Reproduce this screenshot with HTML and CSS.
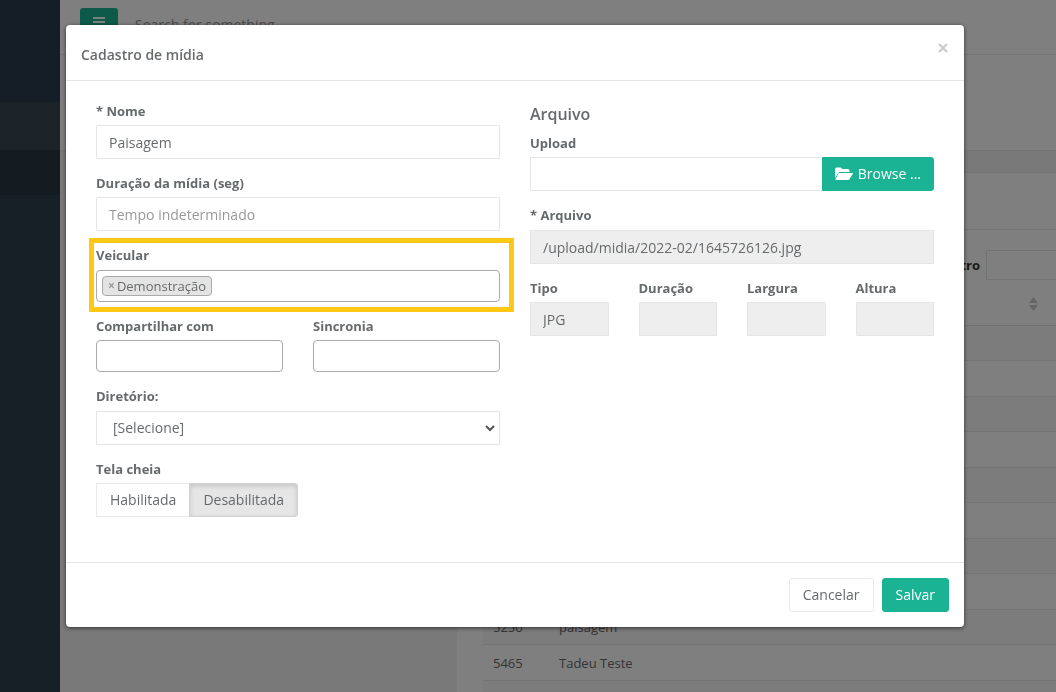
FILE: index.html
```html
<!DOCTYPE html>
<html lang="pt-BR">
<head>
<meta charset="utf-8">
<meta name="viewport" content="width=device-width, initial-scale=1">
<title>Cadastro de mídia</title>
<link rel="stylesheet" href="styles.css">
</head>
<body>
<div class="page">
  <nav class="sidebar" aria-label="Menu">
    <div class="side-top"></div>
    <div class="side-item"></div>
    <div class="side-active"></div>
  </nav>
  <div class="main">
    <header class="topbar">
      <button class="menu-btn" type="button" aria-label="Menu">
        <svg width="12" height="12" viewBox="0 0 12 12" fill="currentColor"><path d="M0 1h12v2H0zM0 5h12v2H0zM0 9h12v2H0z"/></svg>
      </button>
      <input class="top-search" type="text" placeholder="Search for something..." aria-label="Search">
    </header>
    <div class="heading"></div>
    <div class="content">
      <div class="panel-title"></div>
      <div class="panel">
        <div class="filter"><label for="filtro">Filtro</label><input id="filtro" type="text"></div>
        <table class="list">
          <thead><tr><th class="col-id"></th><th></th><th class="col-sort"><svg width="9" height="14" viewBox="0 0 9 14" fill="#ccc"><path d="M4.500 0L9 6H0zM0 8h9l-4.500 6z"/></svg></th></tr></thead>
          <tbody>
            <tr><td></td><td></td><td></td></tr>
            <tr><td></td><td></td><td></td></tr>
            <tr><td></td><td></td><td></td></tr>
            <tr><td></td><td></td><td></td></tr>
            <tr><td></td><td></td><td></td></tr>
            <tr><td></td><td></td><td></td></tr>
            <tr><td></td><td></td><td></td></tr>
            <tr><td></td><td></td><td></td></tr>
            <tr><td>5250</td><td>paisagem</td><td></td></tr>
            <tr><td>5465</td><td>Tadeu Teste</td><td></td></tr>
            <tr><td></td><td></td><td></td></tr>
          </tbody>
        </table>
      </div>
    </div>
  </div>
</div>

<div class="overlay">
  <form class="modal" role="dialog" aria-labelledby="modal-title">
    <header class="modal-head">
      <h1 id="modal-title">Cadastro de mídia</h1>
      <button class="close" type="button" aria-label="Fechar">
        <svg width="10" height="10" viewBox="0 0 10 10" stroke="currentColor" stroke-width="2.200"><path d="M1 1l8 8M9 1L1 9"/></svg>
      </button>
    </header>
    <div class="modal-body">
      <div class="column">
        <div class="group"><label for="nome">* Nome</label><input class="control" id="nome" type="text" value="Paisagem"></div>
        <div class="group"><label for="tempo">Duração da mídia (seg)</label><input class="control" id="tempo" type="text" placeholder="Tempo indeterminado"></div>
        <div class="group roomy highlight">
          <label for="veicular">Veicular</label>
          <div class="tagbox">
            <span class="tag"><button type="button" aria-label="Remover">×</button>Demonstração</span>
            <input id="veicular" type="text">
          </div>
        </div>
        <div class="pair">
          <div class="group"><label for="compartilhar">Compartilhar com</label><div class="tagbox"><input id="compartilhar" type="text"></div></div>
          <div class="group"><label for="sincronia">Sincronia</label><div class="tagbox"><input id="sincronia" type="text"></div></div>
        </div>
        <div class="group roomy">
          <label for="diretorio">Diretório:</label>
          <div class="select-wrap">
            <select class="control" id="diretorio"><option>[Selecione]</option></select>
            <svg class="chevron" width="10" height="7" viewBox="0 0 10 7" fill="none" stroke="#555" stroke-width="2"><path d="M1 1l4 4 4-4"/></svg>
          </div>
        </div>
        <div class="group">
          <span class="label" id="tela">Tela cheia</span>
          <div class="toggle" role="group" aria-labelledby="tela">
            <button class="btn" type="button" aria-pressed="false">Habilitada</button>
            <button class="btn active" type="button" aria-pressed="true">Desabilitada</button>
          </div>
        </div>
      </div>
      <div class="column">
        <h2>Arquivo</h2>
        <div class="group">
          <label for="upload">Upload</label>
          <div class="upload">
            <input class="control" id="upload" type="text">
            <button class="btn primary" type="button">
              <svg width="18" height="14" viewBox="0 0 18 14" fill="currentColor"><path d="M0 11V2q0-1.500 1.500-1.500h4Q7 .5 7 2h6q1.500 0 1.500 1.500V5H5Q4 5 3.300 5.900zM4.300 6H17.500q.8 0 .3.800L14.500 12.300q-.5.700-1.500.7H.8q-.8 0-.3-.8L3.300 6.700Q3.700 6 4.300 6z"/></svg>
              Browse ...
            </button>
          </div>
        </div>
        <div class="group roomy"><label for="arquivo">* Arquivo</label><input class="control" id="arquivo" type="text" value="/upload/midia/2022-02/1645726126.jpg" readonly></div>
        <div class="quad">
          <div class="group"><label for="tipo">Tipo</label><input class="control" id="tipo" type="text" value="JPG" readonly></div>
          <div class="group"><label for="duracao">Duração</label><input class="control" id="duracao" type="text" readonly></div>
          <div class="group"><label for="largura">Largura</label><input class="control" id="largura" type="text" readonly></div>
          <div class="group"><label for="altura">Altura</label><input class="control" id="altura" type="text" readonly></div>
        </div>
      </div>
    </div>
    <footer class="modal-foot">
      <button class="btn" type="button">Cancelar</button>
      <button class="btn primary" type="submit">Salvar</button>
    </footer>
  </form>
</div>
</body>
</html>
```
FILE: styles.css
```css
* { box-sizing: border-box; }
body {
  margin: 0;
  height: 100vh;
  overflow: hidden;
  font: 13px/18px "Open Sans", "Noto Sans", sans-serif;
  color: #676a6c;
}
input, select, button { font: inherit; color: inherit; margin: 0; }

/* Page behind the dialog */
.page { display: flex; min-height: 100vh; background: #f3f3f4; }
.sidebar { flex: none; width: 60px; background: #2f3e4e; }
.side-top { height: 102px; background: #2a3c4c; }
.side-item { height: 48px; background: #364450; }
.side-active { height: 45px; background: #293642; }
.main { flex: 1; min-width: 0; }
.topbar {
  display: flex;
  align-items: flex-start;
  gap: 12px;
  height: 55px;
  padding: 8px 20px;
  background: #fff;
  border-bottom: 1px solid #e7eaec;
}
.menu-btn {
  width: 38px;
  height: 28px;
  padding: 0;
  border: 0;
  border-radius: 3px;
  background: #1ab394;
  color: #fff;
}
.menu-btn svg { display: block; margin: 5px auto; }
.top-search { flex: 1; height: 32px; border: 0; padding: 0 5px; background: none; font-size: 14px; }
.heading { height: 96px; background: #fff; border-bottom: 1px solid #e7eaec; }
.content { margin-left: 397px; padding-top: 21px; }
.panel-title { height: 58px; background: #fff; border-top: 1px solid #e7eaec; border-bottom: 1px solid #e7eaec; }
.panel { padding: 20px 0 0 26px; background: #fff; }
.filter { display: flex; justify-content: flex-end; align-items: center; gap: 6px; color: #333; font-weight: 700; }
.filter input { width: 70px; height: 30px; border: 1px solid #e5e6e7; border-right: 0; background: #fff; }
.list { width: 100%; table-layout: fixed; border-collapse: separate; border-spacing: 0; }
.list th { height: 46px; padding: 6px 18px 0 0; border-bottom: 1px solid #ddd; text-align: right; }
.list td { height: 35px; padding: 0 10px; border-bottom: 1px solid #e7eaec; }
.list tr:nth-child(even) td { height: 36px; }
.list tbody tr:nth-child(odd) { background: #f9f9f9; }
.col-id { width: 66px; }
.col-sort { width: 200px; }

/* Dialog */
.overlay {
  position: fixed;
  inset: 0;
  overflow: auto;
  padding: 25px 92px 25px 66px;
  background: rgba(0, 0, 0, .5);
}
.modal { background: #fff; border-radius: 4px; box-shadow: 0 1px 4px rgba(0, 0, 0, .6); }
.modal-head {
  display: flex;
  justify-content: space-between;
  align-items: flex-start;
  padding: 20px 15px 16px;
  border-bottom: 1px solid #e5e5e5;
}
h1, h2 { margin: 0; font-weight: 600; }
h1 { font-size: 14px; line-height: 19px; }
.close { display: flex; margin-top: -3px; padding: 1px; border: 0; background: none; color: #ccc; }
.modal-body {
  display: grid;
  grid-template-columns: 1fr 1fr;
  gap: 30px;
  padding: 21px 30px 45px;
}
.column { display: flex; flex-direction: column; gap: 15px; min-width: 0; }
h2 { font-size: 16px; line-height: 24px; margin-bottom: -7px; }
.group { display: flex; flex-direction: column; gap: 5px; min-width: 0; }
.group.roomy { gap: 6px; }
.group > label, .label { font-weight: 700; }
.control {
  width: 100%;
  min-width: 0;
  height: 34px;
  padding: 6px 12px;
  border: 1px solid #e5e6e7;
  border-radius: 1px;
  background: #fff;
  font-size: 14px;
}
.control[readonly] { background: #eee; }
::placeholder { color: #999; opacity: 1; }
.highlight { position: relative; }
.highlight::before {
  content: "";
  position: absolute;
  inset: -8px -14px -10px -7px;
  border: 5px solid #ffc814;
  pointer-events: none;
}
.tagbox {
  display: flex;
  align-items: center;
  height: 32px;
  padding: 0 5px;
  border: 1px solid #aaa;
  border-radius: 4px;
}
.tagbox input { flex: 1; width: 0; min-width: 0; border: 0; padding: 0; background: none; outline: 0; }
.tag {
  display: flex;
  align-items: center;
  height: 20px;
  padding: 0 5px;
  border: 1px solid #aaa;
  border-radius: 4px;
  background: #e4e4e4;
}
.tag button { padding: 0 2px 0 0; border: 0; background: none; color: #999; font-weight: 700; font-size: 12px; }
.pair { display: grid; grid-template-columns: 1fr 1fr; gap: 30px; }
.quad { display: grid; grid-template-columns: repeat(4, 1fr); gap: 30px; }
.select-wrap { position: relative; }
.select-wrap select { appearance: none; padding: 6px 16px; }
.chevron { position: absolute; right: 5px; top: 14px; pointer-events: none; }
.btn {
  display: inline-flex;
  align-items: center;
  gap: 5px;
  height: 34px;
  padding: 0 13px;
  border: 1px solid #e7eaec;
  border-radius: 3px;
  background: #fff;
  font-size: 14px;
  white-space: nowrap;
}
.btn.primary { border-color: #1ab394; background: #1ab394; color: #fff; }
.btn.active { border-color: #d2d2d2; background: #e6e6e6; box-shadow: inset 0 2px 5px rgba(0, 0, 0, .15); }
.toggle { display: flex; }
.toggle .btn:first-child { border-right: 0; border-radius: 1px 0 0 1px; }
.toggle .btn:last-child { border-radius: 0 3px 3px 0; }
.upload { display: flex; }
.upload .control { flex: 1; border-right: 0; }
.upload .btn { padding: 0 12px; border-radius: 0 3px 3px 0; }
.modal-foot {
  display: flex;
  justify-content: flex-end;
  gap: 8px;
  padding: 15px;
  border-top: 1px solid #e5e5e5;
}
```
